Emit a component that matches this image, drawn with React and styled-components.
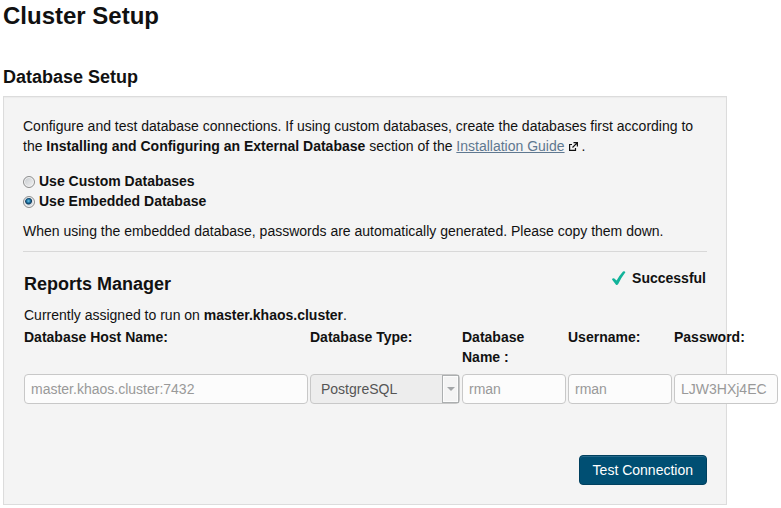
import React from "react";
import styled, { createGlobalStyle } from "styled-components";

const GlobalStyle = createGlobalStyle`
  *, *::before, *::after { box-sizing: border-box; }
  body {
    margin: 0;
    background: #fff;
    color: #111;
    font: 14px/20px "Liberation Sans", Arial, sans-serif;
  }
`;

const Page = styled.main`
  padding: 0 54px 0 3px;
`;

const PageTitle = styled.h1`
  margin: 0 0 32px;
  font-size: 24px;
  line-height: 32px;
`;

const SectionTitle = styled.h2`
  margin: 0 0 6px;
  font-size: 18px;
  line-height: 26px;
`;

const Panel = styled.section`
  padding: 19px;
  background: #f4f4f4;
  border: 1px solid #dcdcdc;
  box-shadow: inset 0 1px 1px #ececec;
`;

const Text = styled.p`
  margin: 0;
`;

const GuideLink = styled.a`
  color: #5f7890;
  text-decoration: underline;
`;

const LinkIcon = styled.svg`
  margin-left: 4px;
  width: 9px;
  height: 9px;
`;

const Choices = styled.fieldset`
  margin: 15px 0 10px;
  padding: 0;
  border: 0;
`;

const Choice = styled.label`
  display: flex;
  align-items: center;
  gap: 4px;
  height: 20px;
  font-weight: bold;
`;

const Radio = styled.input`
  appearance: none;
  margin: 1px 0 0;
  width: 12px;
  height: 12px;
  border: 1px solid #8e8f8f;
  border-radius: 50%;
  background: linear-gradient(135deg, #c4c8cc, #f4f4f4);
  box-shadow: inset 0 0 0 1px #f4f4f4;

  &:checked {
    background: radial-gradient(circle at 45% 40%, #6cc5ea 0, #176a98 2px, #123a5c 3px, #d8dde2 4px);
  }
`;

const Divider = styled.hr`
  margin: 10px 0 0;
  border: 0;
  border-top: 1px solid #d8d8d8;
`;

const ServiceHeader = styled.header`
  display: flex;
  justify-content: space-between;
  padding: 16px 1px 0;
`;

const ServiceTitle = styled.h3`
  margin: 0 0 5px;
  font-size: 18px;
  line-height: 32px;
`;

const Status = styled.div`
  display: flex;
  align-items: center;
  gap: 5px;
  height: 20px;
  font-weight: bold;
`;

const CheckIcon = styled.svg`
  width: 16px;
  height: 16px;
`;

const Assignment = styled(Text)`
  padding-left: 1px;
`;

const Fields = styled.div`
  display: grid;
  grid-template-columns: 1fr 150px repeat(3, 104px);
  gap: 2px;
  margin: 2px -71px 0 1px;
`;

const Field = styled.label`
  display: flex;
  flex-direction: column;
  justify-content: space-between;
  gap: 7px;
  font-weight: bold;
`;

const TextInput = styled.input`
  width: 100%;
  height: 30px;
  padding: 0 6px;
  border: 1px solid #c8c8c8;
  border-radius: 4px;
  background: #fcfcfc;
  color: #999;
  font: inherit;
  font-weight: normal;
`;

const SelectBox = styled.span`
  position: relative;
  display: flex;
`;

const Select = styled.select`
  appearance: none;
  width: 100%;
  height: 30px;
  padding: 0 24px 0 10px;
  border: 1px solid #c8c8c8;
  border-radius: 4px;
  background: #ededed;
  color: #555;
  font: inherit;
  font-weight: normal;
  opacity: 1;
`;

const SelectArrow = styled.span`
  position: absolute;
  inset: 1px 1px 1px auto;
  display: flex;
  align-items: center;
  justify-content: center;
  width: 17px;
  border: 1px solid #acafb0;
  background: #f4f4f4;
  box-shadow: inset 0 0 0 1px #fcfcfc;
  pointer-events: none;

  &::after {
    content: "";
    border: 4px solid transparent;
    border-top-color: #a3a6a8;
    border-bottom: 0;
  }
`;

const Actions = styled.div`
  display: flex;
  justify-content: flex-end;
  margin-top: 51px;
`;

const Button = styled.button`
  height: 30px;
  padding: 0 13px;
  border: 1px solid #00405f;
  border-radius: 4px;
  background: #004f73;
  box-shadow: inset 0 1px 0 #26698a;
  color: #fff;
  font: inherit;
`;

const choices = [
  { value: "custom", label: "Use Custom Databases" },
  { value: "embedded", label: "Use Embedded Database" },
];

const credentials = [
  { label: "Database Name :", value: "rman" },
  { label: "Username:", value: "rman" },
  { label: "Password:", value: "LJW3HXj4EC" },
];

export default function App() {
  return (
    <>
      <GlobalStyle />
      <Page>
        <PageTitle>Cluster Setup</PageTitle>
        <SectionTitle>Database Setup</SectionTitle>
        <Panel>
          <Text>
            Configure and test database connections. If using custom databases, create the databases first according to
            the <strong>Installing and Configuring an External Database</strong> section of the{" "}
            <GuideLink href="#guide">Installation Guide</GuideLink>
            <LinkIcon viewBox="0 0 9 9" fill="none" stroke="#111" strokeWidth="1.2" aria-hidden="true">
              <path d="M3 2.5H.6v5.9h5.9V6M4.5.6h3.9v3.9M8.4.6 3.5 5.5" />
            </LinkIcon>{" "}
            .
          </Text>
          <Choices>
            {choices.map((c) => (
              <Choice key={c.value}>
                <Radio type="radio" name="database" value={c.value} defaultChecked={c.value === "embedded"} />
                {c.label}
              </Choice>
            ))}
          </Choices>
          <Text>When using the embedded database, passwords are automatically generated. Please copy them down.</Text>
          <Divider />
          <ServiceHeader>
            <ServiceTitle>Reports Manager</ServiceTitle>
            <Status role="status">
              <CheckIcon viewBox="0 0 16 16" fill="#12b39a" aria-hidden="true">
                <path d="M1 9.6Q1.2 8.2 3 8.3L5.6 10.6Q8.5 5.2 12 1.4Q13.8.8 14.4 2.2Q10.2 7.6 7.2 14Q6 15.6 4.8 14.4Z" />
              </CheckIcon>
              Successful
            </Status>
          </ServiceHeader>
          <Assignment>
            Currently assigned to run on <strong>master.khaos.cluster</strong>.
          </Assignment>
          <Fields>
            <Field>
              Database Host Name:
              <TextInput disabled defaultValue="master.khaos.cluster:7432" />
            </Field>
            <Field>
              Database Type:
              <SelectBox>
                <Select disabled defaultValue="PostgreSQL">
                  <option>PostgreSQL</option>
                </Select>
                <SelectArrow />
              </SelectBox>
            </Field>
            {credentials.map((f) => (
              <Field key={f.label}>
                {f.label}
                <TextInput disabled defaultValue={f.value} />
              </Field>
            ))}
          </Fields>
          <Actions>
            <Button type="button">Test Connection</Button>
          </Actions>
        </Panel>
      </Page>
    </>
  );
}
